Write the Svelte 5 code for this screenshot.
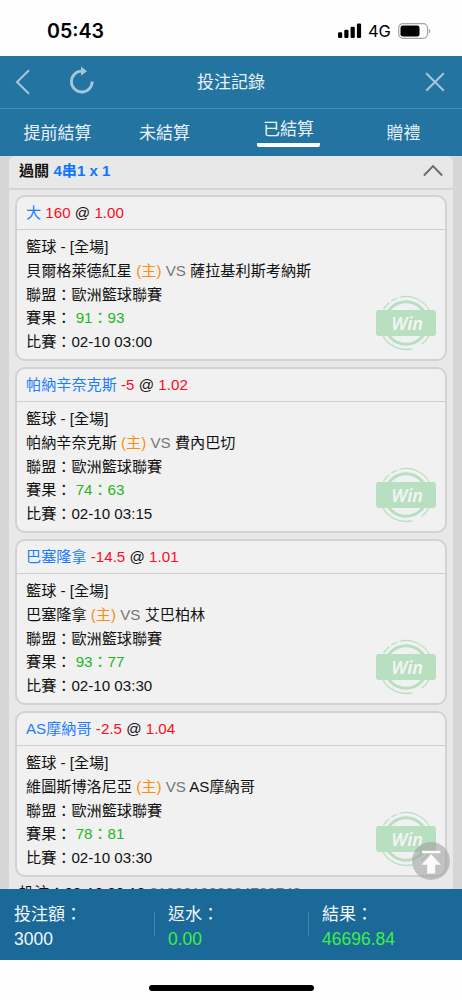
<script lang="ts">
	const tabs = ['提前結算', '未結算', '已結算', '贈禮'];
	let activeTab = $state('已結算');
	let expanded = $state(true);

	const bets = [
		{
			pick: '大',
			line: '160',
			odds: '1.00',
			home: '貝爾格萊德紅星',
			away: '薩拉基利斯考納斯',
			score: '91：93',
			time: '02-10 03:00'
		},
		{
			pick: '帕納辛奈克斯',
			line: '-5',
			odds: '1.02',
			home: '帕納辛奈克斯',
			away: '費內巴切',
			score: '74：63',
			time: '02-10 03:15'
		},
		{
			pick: '巴塞隆拿',
			line: '-14.5',
			odds: '1.01',
			home: '巴塞隆拿',
			away: '艾巴柏林',
			score: '93：77',
			time: '02-10 03:30'
		},
		{
			pick: 'AS摩納哥',
			line: '-2.5',
			odds: '1.04',
			home: '維圖斯博洛尼亞',
			away: 'AS摩納哥',
			score: '78：81',
			time: '02-10 03:30'
		}
	];

	const totals = [
		{ label: '投注額：', value: '3000', positive: false },
		{ label: '返水：', value: '0.00', positive: true },
		{ label: '結果：', value: '46696.84', positive: true }
	];
</script>

<div class="screen">
	<div class="status-bar">
		<span class="clock">05:43</span>
		<div class="status-right">
			<svg class="signal" width="24" height="16" viewBox="0 0 24 16">
				<rect x="0" y="9.2" width="4.2" height="5.8" rx="1.2" />
				<rect x="6.3" y="6.8" width="4.2" height="8.2" rx="1.2" />
				<rect x="12.6" y="3.8" width="4.2" height="11.2" rx="1.2" />
				<rect x="18.9" y="0.5" width="4.2" height="14.5" rx="1.2" />
			</svg>
			<span class="network">4G</span>
			<svg width="33" height="16" viewBox="0 0 33 16">
				<rect x="0.7" y="0.7" width="28.8" height="14.6" rx="4.2" fill="none" stroke="#a5a5a5" stroke-width="1.2" />
				<rect x="2.5" y="2.5" width="19" height="11" rx="2.3" />
				<path d="M30.8 5.7c2.1.8 2.1 3.8 0 4.6z" fill="#a5a5a5" />
			</svg>
		</div>
	</div>

	<header>
		<div class="title-bar">
			<div class="nav-left">
				<button aria-label="back">
					<svg width="16" height="26" viewBox="0 0 16 26">
						<path d="M14 1.2 2 13l12 11.8" fill="none" stroke="#a6c7da" stroke-width="2" />
					</svg>
				</button>
				<button aria-label="refresh">
					<svg width="26" height="28" viewBox="0 0 26 28">
						<path d="M23.2 15.6A10.4 10.4 0 1 1 13.2 5.2" fill="none" stroke="#a6c7da" stroke-width="2.8" />
						<path d="M12 .6 18 5.2 12 9.6z" fill="#a6c7da" />
					</svg>
				</button>
			</div>
			<h1>投注記錄</h1>
			<button class="close" aria-label="close">
				<svg width="20" height="20" viewBox="0 0 20 20">
					<path d="M1.2 1.2 18.8 18.8M18.8 1.2 1.2 18.8" fill="none" stroke="#a6c7da" stroke-width="2" />
				</svg>
			</button>
		</div>
		<nav>
			{#each tabs as tab (tab)}
				<button class={['tab', { active: tab === activeTab }]} onclick={() => (activeTab = tab)}>
					<span>{tab}</span>
				</button>
			{/each}
		</nav>
	</header>

	<main>
		<section class="panel">
			<button class="panel-head" onclick={() => (expanded = !expanded)}>
				<span>過關 <em>4串1 x 1</em></span>
				<svg width="20" height="13" viewBox="0 0 20 13">
					<path d="M.9 11.5 10 2l9.1 9.5" fill="none" stroke="#6b6b6b" stroke-width="1.9" />
				</svg>
			</button>

			{#if expanded}
				<div class="bets">
					{#each bets as bet, i (i)}
						<article class="card">
							<div class="card-head">
								<span class="pick">{bet.pick}</span>
								<span class="red">{bet.line}</span> @
								<span class="red">{bet.odds}</span>
							</div>
							<div class="card-body">
								<div>籃球 - [全場]</div>
								<div>
									{bet.home} <span class="host">(主)</span> <span class="vs">VS</span>
									{bet.away}
								</div>
								<div>聯盟：歐洲籃球聯賽</div>
								<div>賽果： <span class="score">{bet.score}</span></div>
								<div>比賽：{bet.time}</div>
								<svg class="stamp" width="60" height="56" viewBox="0 0 60 56">
									<g fill="none" stroke="#b8dfc0">
										<circle cx="30" cy="28" r="21.2" stroke-width="3" />
										<path d="M23.5 2.3A26.5 26.5 0 0 1 53.5 15.5" stroke-width="1.1" />
										<path d="M15.5 5.8 21.5 3M7.5 14Q10 10.5 13.2 7.8" stroke-width="1.3" />
										<path d="M6.5 40A26.5 26.5 0 0 0 36.5 53.7M45.5 49.3A26.5 26.5 0 0 0 53.5 40" stroke-width="1.3" />
									</g>
									<rect x="0" y="15" width="60" height="26" rx="3" fill="#b8dfc0" />
									<text x="31.2" y="34.6" text-anchor="middle">Win</text>
								</svg>
							</div>
						</article>
					{/each}
				</div>
				<div class="ticket">投注：02-10 00:18 <span>319001202324703740</span></div>
			{/if}
		</section>

		<button class="to-top" aria-label="top">
			<svg width="38" height="38" viewBox="0 0 38 38">
				<circle cx="19" cy="19" r="19" fill="#9b9b9b" fill-opacity="0.55" />
				<path d="M10 8.7h18.4v2.5H10zM19.2 12.3 29 22.8h-5.8v8.7h-8v-8.7H9.5z" fill="#fafafa" />
			</svg>
		</button>
	</main>

	<footer>
		{#each totals as total (total.label)}
			<div class="total">
				<div>{total.label}</div>
				<div class={['value', { positive: total.positive }]}>{total.value}</div>
			</div>
		{/each}
	</footer>
	<div class="home-area"><div class="home-indicator"></div></div>
</div>

<style>
	:global(body) {
		background: #fefefe;
	}

	.screen {
		display: flex;
		flex-direction: column;
		width: 462px;
		height: 1000px;
		overflow: hidden;
		font-family: 'Liberation Sans', 'Noto Sans CJK TC', sans-serif;
		font-size: 15.15px;
		color: #111;
	}

	button {
		display: flex;
		padding: 0;
		border: 0;
		background: none;
		font: inherit;
		color: inherit;
	}

	/* Status bar */
	.status-bar {
		box-sizing: border-box;
		flex: none;
		display: flex;
		justify-content: space-between;
		align-items: center;
		height: 56px;
		padding: 6px 31px 0 47px;
		font-family: Inter, sans-serif;
		color: #000;
	}

	.clock {
		font-size: 19.6px;
		font-weight: 600;
	}

	.status-right {
		display: flex;
		align-items: center;
	}

	.network {
		width: 23px;
		margin: 0 7px 0 6px;
		font-size: 16.5px;
		font-weight: 400;
		letter-spacing: -0.2px;
	}

	/* Header */
	header {
		flex: none;
		height: 100px;
		background: #2474a2;
		color: #eaf2f7;
		font-size: 17px;
	}

	.title-bar {
		box-sizing: border-box;
		display: grid;
		grid-template-columns: 1fr auto 1fr;
		align-items: center;
		height: 53px;
		padding: 0 17px 0 15px;
		border-bottom: 1px solid #4b8db3;
	}

	.nav-left {
		display: flex;
		align-items: center;
		gap: 38px;
	}

	.nav-left button:last-child {
		margin-top: -4px;
	}

	h1 {
		margin: -3px 0 0 2px;
		font-size: 17px;
		font-weight: 400;
	}

	.close {
		justify-self: end;
	}

	nav {
		display: grid;
		grid-template-columns: 115px 99px 149px 81px;
		height: 47px;
	}

	.tab {
		justify-content: center;
		align-items: center;
		padding-top: 3px;
	}

	.tab span {
		line-height: 28px;
	}

	.tab.active {
		padding: 0 0 2px;
	}

	.tab.active span {
		padding: 0 6px;
		border-bottom: 4px solid #fff;
		border-radius: 2px;
		line-height: 27px;
	}

	/* Bet list */
	main {
		position: relative;
		flex: none;
		height: 733px;
		overflow: hidden;
		background: #d6d6d6;
	}

	.panel {
		margin: 0 9px;
		height: 740px;
		border-radius: 6px 6px 0 0;
		background: #e8e8e8;
	}

	.panel-head {
		box-sizing: border-box;
		justify-content: space-between;
		align-items: center;
		width: 100%;
		height: 34px;
		padding: 0 10px 3px;
		border-bottom: 2px solid #d4d4d4;
		font-size: 15.1px;
		font-weight: 700;
	}

	.panel-head span {
		padding-bottom: 3px;
	}

	em {
		color: #0f75ff;
		font-style: normal;
	}

	.bets {
		display: flex;
		flex-direction: column;
		gap: 6px;
		padding: 5px 6px 0;
	}

	.card {
		box-sizing: border-box;
		height: 166px;
		border: 2px solid #d2d2d2;
		border-radius: 10px;
		background: #f1f1f1;
	}

	.card-head {
		box-sizing: border-box;
		height: 33px;
		padding-left: 9px;
		border-bottom: 1px solid #cfcfcf;
		line-height: 32px;
	}

	.card-body {
		position: relative;
		padding: 5.4px 9px 0;
		line-height: 23.7px;
		white-space: nowrap;
	}

	.card-body > div {
		height: 23.7px;
	}

	.pick {
		color: #1e7cff;
	}

	.red {
		color: #fb0d1b;
	}

	.host {
		color: #ff8c0f;
	}

	.vs {
		color: #777;
	}

	.score {
		color: #22b822;
	}

	.stamp {
		position: absolute;
		right: 9px;
		top: 65px;
	}

	.stamp text {
		font: italic 600 18px 'Noto Sans', sans-serif;
		fill: #f4f4f4;
	}

	.ticket {
		padding: 3px 10px 0;
		line-height: 25px;
	}

	.ticket span {
		color: #777;
	}

	.to-top {
		position: absolute;
		right: 12px;
		bottom: 9px;
	}

	/* Totals */
	footer {
		box-sizing: border-box;
		flex: none;
		display: grid;
		grid-template-columns: repeat(3, 154px);
		height: 71px;
		padding-top: 14px;
		background: #1a6999;
		color: #f3f7fa;
		font-size: 17px;
		line-height: 24.5px;
	}

	.total {
		padding-left: 14px;
		background: linear-gradient(#4685ab, #4685ab) no-repeat 0 9px / 1px 24px;
	}

	.total:first-child {
		background: none;
	}

	.value {
		font-size: 17.5px;
		line-height: 23px;
	}

	.positive {
		color: #3cf046;
	}

	.home-area {
		display: flex;
		justify-content: center;
		padding-top: 25px;
	}

	.home-indicator {
		width: 165px;
		height: 6px;
		border-radius: 3px;
		background: #000;
	}
</style>
